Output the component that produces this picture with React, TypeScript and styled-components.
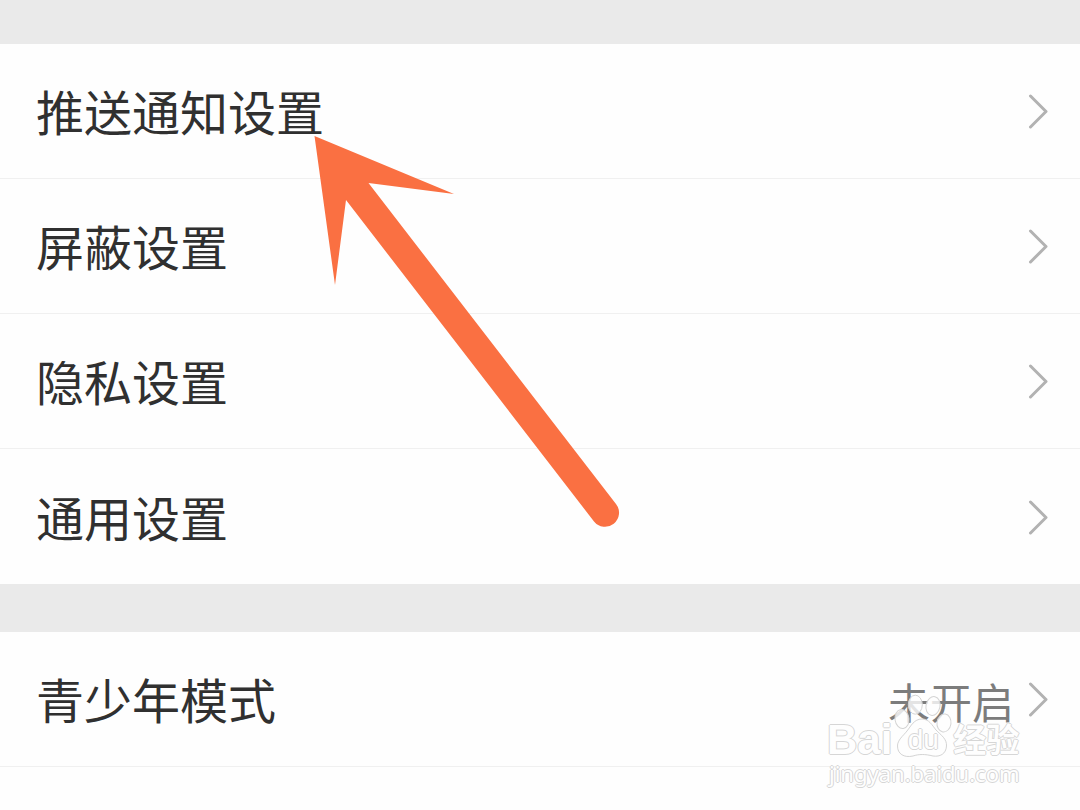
import React from "react";
import styled, { createGlobalStyle } from "styled-components";

const GlobalStyle = createGlobalStyle`
  *, *::before, *::after { box-sizing: border-box; }
  html, body { margin: 0; padding: 0; background: #fefefe; }
  body { font-family: "Noto Sans CJK SC", "Noto Sans", sans-serif; }
`;

const Page = styled.main`
  position: relative;
  min-height: 100vh;
  background: #fefefe;
`;

const Separator = styled.div<{ $height: number }>`
  height: ${({ $height }) => $height}px;
  background: #eaeaea;
`;

const Group = styled.ul`
  list-style: none;
  margin: 0;
  padding: 0;
`;

const Item = styled.li<{ $divided?: boolean }>`
  height: 135px;
  border-bottom: ${({ $divided }) => ($divided ? "1px solid #f0f0f0" : "0")};
`;

const RowButton = styled.button`
  display: flex;
  align-items: center;
  width: 100%;
  height: 100%;
  padding: 0 32px 0 36px;
  border: 0;
  background: transparent;
  font-family: inherit;
  text-align: left;
  cursor: pointer;
`;

const Label = styled.span`
  flex: 1;
  padding-bottom: 2px;
  font-size: 48px;
  line-height: 64px;
  color: #303030;
`;

const Value = styled.span`
  padding: 4px 14px 0 0;
  font-size: 42px;
  line-height: 64px;
  color: #7c7c7c;
`;

const Chevron = () => (
  <svg width="20" height="36" viewBox="0 0 20 36" fill="none" aria-hidden="true">
    <path d="M2.500 3 L18 18.500 L2.500 34" stroke="#b2b2b2" strokeWidth="3" strokeLinecap="round" strokeLinejoin="round" />
  </svg>
);

const Pointer = styled.svg`
  position: absolute;
  left: 314px;
  top: 136px;
  pointer-events: none;
`;

const Watermark = styled.div`
  position: absolute;
  right: 56px;
  top: 692px;
  display: flex;
  flex-direction: column;
  width: 197px;
  pointer-events: none;
`;

const Brand = styled.div`
  display: flex;
  align-items: flex-end;
  gap: 2px;
  height: 68px;
`;

const outlined = `
  white-space: nowrap;
  color: #fefefe;
  paint-order: stroke fill;
  text-shadow: 1px 0 0 #d6d6d6, -1px 0 0 #d6d6d6, 0 1px 0 #d6d6d6, 0 -1px 0 #d6d6d6;
`;

const Latin = styled.span`
  ${outlined}
  font-family: "Liberation Sans", sans-serif;
  font-size: 42px;
  font-weight: 700;
  line-height: 40px;
  -webkit-text-stroke: 2px #fefefe;
`;

const Han = styled.span`
  ${outlined}
  font-size: 33px;
  font-weight: 700;
  line-height: 44px;
  -webkit-text-stroke: 1px #fefefe;
`;

const Site = styled.span`
  ${outlined}
  font-family: "Noto Sans", sans-serif;
  font-size: 22px;
  line-height: 26px;
  padding-left: 2px;
  -webkit-text-stroke: 1px #fefefe;
`;

const PawBadge = styled.span`
  display: grid;
  width: 57px;
  height: 68px;
  > * { grid-area: 1 / 1; }
`;

const PawText = styled.span`
  ${outlined}
  align-self: end;
  justify-self: center;
  padding-bottom: 4px;
  font-family: "Liberation Sans", sans-serif;
  font-size: 28px;
  line-height: 32px;
`;

const Paw = () => (
  <svg width="58" height="68" viewBox="0 0 58 68" aria-hidden="true">
    <g fill="#fefefe" fillOpacity="0.8" stroke="#d4d4d4" strokeWidth="1">
      <ellipse cx="8" cy="27" rx="7" ry="9.500" transform="rotate(-8 8 27)" />
      <ellipse cx="21.300" cy="12.700" rx="7" ry="9.500" />
      <ellipse cx="39" cy="14" rx="7" ry="9.500" transform="rotate(12 39 14)" />
      <ellipse cx="50" cy="31" rx="7" ry="9" transform="rotate(8 50 31)" />
      <path d="M28 27 C35 27 38 33 42 38 C47 43 53 47 52.500 54 C52 62 46 65 39 64 C31 62 25 62 19 64 C10 66 3.500 62 3.500 54 C3.500 48 9 44 13 39 C17 34 20 27 28 27 Z" />
    </g>
  </svg>
);

type Row = { label: string; value?: string; divided?: boolean };

const general: Row[] = [
  { label: "推送通知设置", divided: true },
  { label: "屏蔽设置", divided: true },
  { label: "隐私设置", divided: true },
  { label: "通用设置" },
];

const youth: Row[] = [{ label: "青少年模式", value: "未开启", divided: true }];

const SettingsGroup = ({ rows }: { rows: Row[] }) => (
  <Group>
    {rows.map((row) => (
      <Item key={row.label} $divided={row.divided}>
        <RowButton type="button">
          <Label>{row.label}</Label>
          {row.value && <Value>{row.value}</Value>}
          <Chevron />
        </RowButton>
      </Item>
    ))}
  </Group>
);

export default function App() {
  return (
    <>
      <GlobalStyle />
      <Page>
        <Separator $height={44} />
        <SettingsGroup rows={general} />
        <Separator $height={48} />
        <SettingsGroup rows={youth} />
        <Pointer width="306" height="392" viewBox="314 136 306 392" aria-hidden="true">
          <path
            d="M314.500 136 L454 194 L368.500 183 L616 504 A14 14 0 0 1 594 521.500 L346 200 L335 285 Z"
            fill="#fa7042"
          />
        </Pointer>
        <Watermark>
          <Brand>
            <Latin>Bai</Latin>
            <PawBadge>
              <Paw />
              <PawText>du</PawText>
            </PawBadge>
            <Han>经验</Han>
          </Brand>
          <Site>jingyan.baidu.com</Site>
        </Watermark>
      </Page>
    </>
  );
}
